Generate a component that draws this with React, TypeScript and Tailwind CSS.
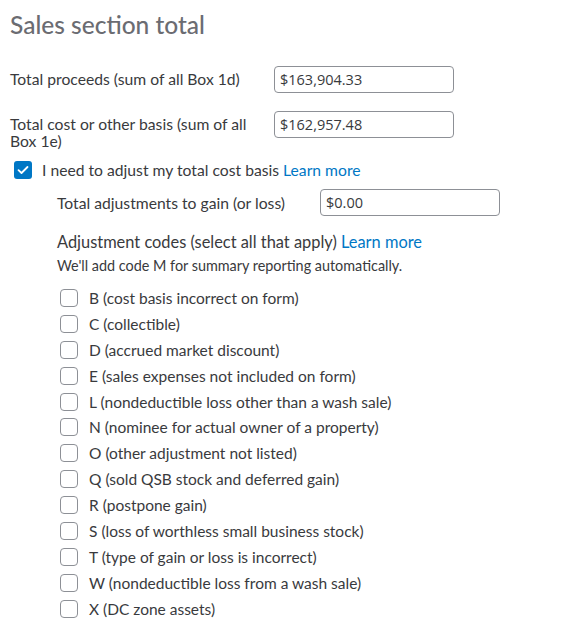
import React, { useState } from 'react';

const codes = [
  'B (cost basis incorrect on form)',
  'C (collectible)',
  'D (accrued market discount)',
  'E (sales expenses not included on form)',
  'L (nondeductible loss other than a wash sale)',
  'N (nominee for actual owner of a property)',
  'O (other adjustment not listed)',
  'Q (sold QSB stock and deferred gain)',
  'R (postpone gain)',
  'S (loss of worthless small business stock)',
  'T (type of gain or loss is incorrect)',
  'W (nondeductible loss from a wash sale)',
  'X (DC zone assets)',
];

const MoneyInput: React.FC<{ value: string }> = ({ value }) => (
  <input
    defaultValue={value}
    className="h-[27px] w-[180px] rounded-[4px] border border-[#8d9096] px-[5px] text-[14.5px] text-[#393a3d] outline-none font-['Open_Sans',sans-serif]"
  />
);

const Check = () => (
  <svg width="12" height="10" viewBox="0 0 12 10" fill="none">
    <path d="M1.5 5.2 4.5 8 10.5 2" stroke="white" strokeWidth="1.8" strokeLinecap="round" strokeLinejoin="round" />
  </svg>
);

export default function App() {
  const [adjust, setAdjust] = useState(true);
  const [picked, setPicked] = useState<string[]>([]);

  const toggle = (c: string) =>
    setPicked((p) => (p.includes(c) ? p.filter((x) => x !== c) : [...p, c]));

  return (
    <div className="min-h-screen bg-white pl-[10px] pt-[10px] text-[#393a3d] font-['Lato',sans-serif]">
      <h2 className="text-[24.5px] font-medium leading-[30px] text-[#6b6c72]">Sales section total</h2>

      <div className="mt-[26px] flex items-start">
        <label className="w-[264px] pt-[3px] text-[15.7px] leading-[20px]">Total proceeds (sum of all Box 1d)</label>
        <MoneyInput value="$163,904.33" />
      </div>

      <div className="mt-[18px] flex items-start">
        <label className="w-[264px] pt-[5px] pr-[16px] text-[15.7px] leading-[17px]">
          Total cost or other basis (sum of all Box 1e)
        </label>
        <MoneyInput value="$162,957.48" />
      </div>

      <label className="mt-[10px] ml-[4px] flex items-center gap-[10px] text-[15.7px] leading-[20px]">
        <button
          type="button"
          onClick={() => setAdjust(!adjust)}
          className={`flex h-[18px] w-[18px] items-center justify-center rounded-[3px] ${
            adjust ? 'bg-[#0077c5]' : 'border border-[#8d9096] bg-white'
          }`}
        >
          {adjust && <Check />}
        </button>
        <span>
          I need to adjust my total cost basis <a className="text-[#0077c5]">Learn more</a>
        </span>
      </label>

      {adjust && (
        <div className="pl-[47px]">
          <div className="mt-[9px] flex items-center">
            <span className="w-[263px] text-[15.7px] leading-[20px]">Total adjustments to gain (or loss)</span>
            <MoneyInput value="$0.00" />
          </div>

          <p className="mt-[16px] text-[16.4px] leading-[20px]">
            Adjustment codes (select all that apply) <a className="text-[#0077c5]">Learn more</a>
          </p>
          <p className="mt-[5px] text-[14.4px] leading-[18px]">We'll add code M for summary reporting automatically.</p>

          <ul className="mt-[10px] flex flex-col">
            {codes.map((c) => (
              <li key={c} className="flex h-[25.9px] items-center">
                <button
                  type="button"
                  onClick={() => toggle(c)}
                  className={`ml-[3px] flex h-[18px] w-[18px] items-center justify-center rounded-[4px] ${
                    picked.includes(c) ? 'bg-[#0077c5]' : 'border border-[#8d9096] bg-white'
                  }`}
                >
                  {picked.includes(c) && <Check />}
                </button>
                <span className="ml-[11px] text-[15.5px] leading-[20px]">{c}</span>
              </li>
            ))}
          </ul>
        </div>
      )}
    </div>
  );
}
